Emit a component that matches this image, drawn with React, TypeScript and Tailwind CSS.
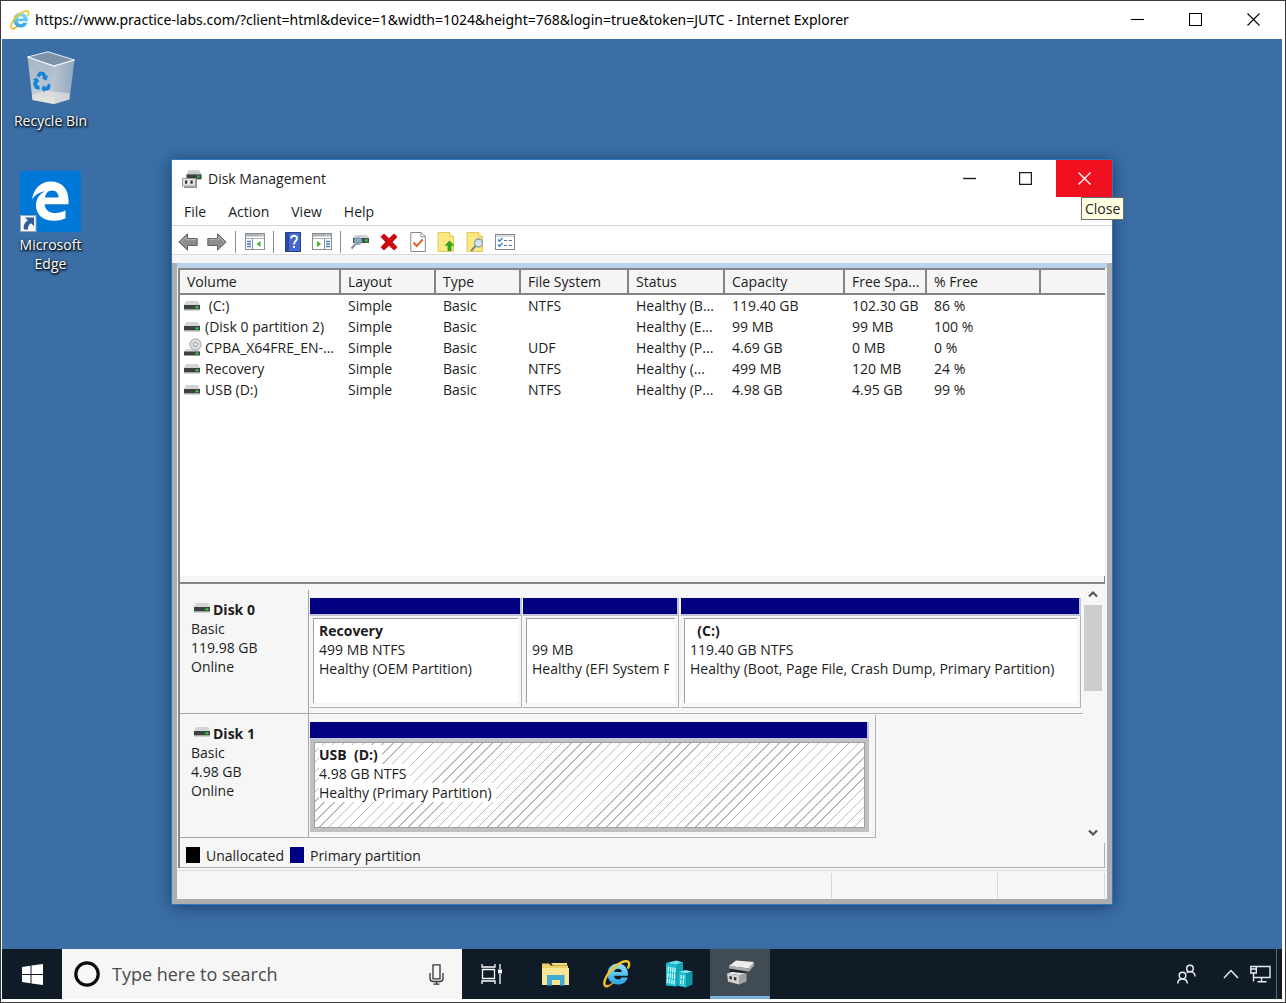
import React from "react";

type IconProps = { className?: string };

function IeIcon({ className }: IconProps) {
  return (
    <svg viewBox="0 0 28 28" className={className} aria-hidden="true">
      <defs>
        <linearGradient id="ieBlue" x1="0" y1="0" x2="0" y2="1">
          <stop offset="0" stopColor="#8fe3fb" />
          <stop offset="1" stopColor="#2ba3e4" />
        </linearGradient>
      </defs>
      <path
        fill="url(#ieBlue)"
        d="M15 3.500c-6 0-10.500 4.600-10.500 10.500S9 24.500 15 24.500c4.700 0 8.400-2.600 9.600-7h-6c-.6 1.300-1.800 2-3.500 2-2.300 0-3.900-1.400-4-3.800h13.800C25.600 8.800 21.500 3.500 15 3.500zm-3.800 8.500c.4-2 1.800-3.200 3.900-3.200s3.500 1.200 3.800 3.200z"
      />
      <path
        d="M5 26C.5 27.500 0 22.500 4 15.500 8.500 8 17.500 1.500 23 1.300c3.700-.1 3.700 3.200 2.200 6.400"
        fill="none"
        stroke="#f3c52d"
        strokeWidth="2.400"
        strokeLinecap="round"
      />
      <path d="M5 26c1.600-.4 3.300-1.600 4.800-2.900" fill="none" stroke="#d99d1a" strokeWidth="1.700" strokeLinecap="round" />
    </svg>
  );
}

function RecycleBin({ className }: IconProps) {
  return (
    <svg viewBox="0 0 48 54" className={className} aria-hidden="true">
      <defs>
        <linearGradient id="binL" x1="0" y1="0" x2="0" y2="1">
          <stop offset="0" stopColor="#a6b6c6" />
          <stop offset="0.800" stopColor="#bfc9d2" />
          <stop offset="1" stopColor="#e3e2de" />
        </linearGradient>
        <linearGradient id="binR" x1="0" y1="0" x2="1" y2="0">
          <stop offset="0" stopColor="#b7c4d0" />
          <stop offset="1" stopColor="#8ea7bf" />
        </linearGradient>
      </defs>
      <path d="M.5 6 21 .8 47.500 9 27 15z" fill="#7d93a9" stroke="#e6edf3" strokeWidth="1" />
      <path d="M.5 6 27 15v38L5.500 49z" fill="url(#binL)" />
      <path d="M47.500 9 27 15v38l15.500-4.500z" fill="url(#binR)" />
      <path d="M5 43.500l14-4 24 3-.8 6L27 53 5.500 49z" fill="#e9e6e0" opacity=".65" />
      <path d="M.5 6 27 15 47.500 9" fill="none" stroke="#eef3f7" strokeWidth="1.200" />
      <g fill="#1583d8">
        <path d="M9.500 24.500l3-4 4.500.5 2.500 4 1.500-.6-1.600 5-4.600-2 1.600-.8-2.200-3.200-1.700 3z" />
        <path d="M6 28l4-1.200 2.700 4-1.500-.4-1.200 3.600 2.500.8.200 4-4.500-1L6 33l1.300-3.500z" />
        <path d="M14.500 37.500l2.700-4v2h2.800l1-3.500 2.700 2.200-1 4-3.200 1.500h-2.300v2z" />
      </g>
    </svg>
  );
}

function EdgeTile({ className }: IconProps) {
  return (
    <svg viewBox="0 0 61 61" className={className} aria-hidden="true">
      <rect width="61" height="61" fill="#0078d7" />
      <path
        fill="#fff"
        d="M12 28.500C13.500 18 20.500 10.500 31 10.500c11 0 17.500 8 17.500 18.500v4.200H24.700c.4 6.200 5 8.800 11 8.800 3.600 0 6.900-1 9.800-2.700v8c-3.300 1.700-7.300 2.500-11.500 2.500-10.600 0-18-5.800-18-15.500 0-6.500 3.500-11.200 8.700-13.800-5 .5-9.600 3-12.700 8zM25 26.500h13.600c0-4.200-2.500-7-6.500-7-3.900 0-6.500 2.800-7.100 7z"
      />
      <rect x="0.500" y="44.500" width="15.500" height="16" fill="#f5f7fa" stroke="#9aa7b5" />
      <path fill="#2f5d9b" d="M5 46.500h9V55l-3-2.800c-2.200 1.300-3.300 3.300-3 6.300H4c-1-4 .7-7.200 4-9z" />
    </svg>
  );
}

function DriveIcon({ className }: IconProps) {
  return (
    <svg viewBox="0 0 16 11" className={className} aria-hidden="true">
      <path d="M2 1h12l2 4H0z" fill="#d3d6d6" />
      <rect y="5" width="16" height="4.500" fill="#3c4240" />
      <rect y="9.500" width="16" height="1" fill="#a9adac" />
      <rect x="11.500" y="6.300" width="3" height="2" fill="#36d447" />
    </svg>
  );
}

function CdIcon({ className }: IconProps) {
  return (
    <svg viewBox="0 0 18 19" className={className} aria-hidden="true">
      <path d="M2 11h12l2 3H0z" fill="#d3d6d6" />
      <rect y="13.500" width="16" height="4" fill="#3c4240" />
      <rect x="11.500" y="14.500" width="3" height="2" fill="#36d447" />
      <circle cx="11.500" cy="6.500" r="5.700" fill="#d9dbdc" stroke="#a4a7a9" />
      <circle cx="11.500" cy="6.500" r="2" fill="#fff" stroke="#8d9193" />
    </svg>
  );
}

function DiskMgmtIcon({ className }: IconProps) {
  return (
    <svg viewBox="0 0 20 18" className={className} aria-hidden="true">
      <path d="M6.500.3h10.500l2.500 4h-15z" fill="#c9cccb" />
      <path d="M4.500 4.300h15v5h-15z" fill="#39413d" />
      <rect x="15" y="5.500" width="2.500" height="2.200" fill="#2fc64a" />
      <rect x="2.500" y="8.500" width="12" height="9" fill="#bdbdbd" stroke="#8d8d8d" />
      <rect x=".5" y="8.500" width="13" height="7.500" fill="#e4e4e4" stroke="#9b9b9b" />
      <rect x="3" y="10.500" width="2.200" height="3.200" fill="#333" />
      <rect x="8.500" y="10.500" width="2.200" height="3.200" fill="#333" />
    </svg>
  );
}

function Arrow({ flip }: { flip?: boolean }) {
  return (
    <svg viewBox="0 0 20 18" className={flip ? "h-[18px] w-5 -scale-x-100" : "h-[18px] w-5"} aria-hidden="true">
      <path d="M.8 9 9.500.8v4.700h9.700v7H9.500v4.700z" fill="#8d8d8d" stroke="#636363" />
      <path d="M3 9l5.300-5v2.700H18" fill="none" stroke="#b5b5b5" />
    </svg>
  );
}

function PaneIcon({ right }: { right?: boolean }) {
  return (
    <svg viewBox="0 0 20 17" className="h-[17px] w-5" aria-hidden="true">
      <rect x=".5" y=".5" width="19" height="16" fill="#fff" stroke="#8c8f91" />
      <rect x="1" y="1" width="18" height="2.500" fill="#a9b0b6" />
      <path d="M14 2h1M17 2h1" stroke="#fff" />
      <path d="M1 5.500h18" stroke="#a5adb5" />
      <path d={right ? "M12.500 6v10" : "M7.500 6v10"} stroke="#8c8f91" />
      <path
        d={right ? "M14 8.500h4M14 11h4M14 13.500h4" : "M2 8.500h4M2 11h4M2 13.500h4"}
        stroke="#4a7fc0"
        strokeWidth="1.300"
      />
      <path d={right ? "M5 8v6l4-3z" : "M15.500 8v6l-4-3z"} fill="#45b31e" />
    </svg>
  );
}

function HelpIcon() {
  return (
    <svg viewBox="0 0 16 20" className="h-5 w-4" aria-hidden="true">
      <rect x=".5" y=".5" width="15" height="19" fill="#4468d0" stroke="#2a3f8c" />
      <path d="M1 1h3v18H1z" fill="#2b489f" />
      <path d="M6 6.500C6 2.800 12 2.800 12 6.500c0 2.500-3 2.500-3 6" fill="none" stroke="#fff" strokeWidth="1.800" />
      <rect x="8" y="14" width="2" height="2" fill="#fff" />
    </svg>
  );
}

function MagnifyDisk() {
  return (
    <svg viewBox="0 0 20 17" className="h-[17px] w-5" aria-hidden="true">
      <path d="M5 2h12l2 3H3z" fill="#d0d4d4" />
      <path d="M3 5h16v5H3z" fill="#48504f" />
      <rect x="15" y="6.300" width="2.800" height="2.300" fill="#32c550" />
      <circle cx="8" cy="8" r="3.600" fill="#7ea9bd" stroke="#93a5ae" />
      <path d="M5.500 11 1.500 15.500" stroke="#7d8c95" strokeWidth="2" />
    </svg>
  );
}

function RedX() {
  return (
    <svg viewBox="0 0 18 18" className="h-[18px] w-[18px]" aria-hidden="true">
      <path d="M4 .5 9 5.300 14 .5 17.500 3.800 12.600 9l4.900 5.200L14 17.500 9 12.700 4 17.500.5 14.200 5.400 9 .5 3.800z" fill="#cc0a12" />
    </svg>
  );
}

function CheckDoc() {
  return (
    <svg viewBox="0 0 16 20" className="h-5 w-4" aria-hidden="true">
      <path d="M.8.5h10.500l4 4v15H.8z" fill="#fff" stroke="#8b8b8b" />
      <path d="M11 .5v4.300h4.500" fill="none" stroke="#8b8b8b" />
      <path d="M3.500 10.500l3.200 3.500 6-6.500" fill="none" stroke="#e5622a" strokeWidth="2" />
    </svg>
  );
}

function YellowDoc({ search }: { search?: boolean }) {
  return (
    <svg viewBox="0 0 19 20" className="h-5 w-[19px]" aria-hidden="true">
      <path d="M1 .5h11.500l4 4v15H1z" fill="#fbe882" stroke="#e3c85c" />
      <path d="M12.500.5v4h4" fill="#fff6c2" stroke="#e3c85c" />
      {search ? (
        <>
          <circle cx="12.500" cy="11" r="4" fill="#cfe6f2" stroke="#8b9ba5" strokeWidth="1.300" />
          <path d="M9.500 14 5 19" stroke="#7c868c" strokeWidth="2" />
        </>
      ) : (
        <path d="M12.500 8.500l5 5.300h-3V19h-4v-5.200h-3z" fill="#33a51d" />
      )}
    </svg>
  );
}

function ChecklistIcon() {
  return (
    <svg viewBox="0 0 20 16" className="h-4 w-5" aria-hidden="true">
      <rect x=".5" y=".5" width="19" height="15" fill="#fff" stroke="#82878c" />
      <path d="M1 2h18" stroke="#b7bdc2" />
      <path d="M3 5.500l1.500 1.700L7.500 4M3 10.500l1.500 1.700L7.500 9" fill="none" stroke="#2a7fd0" strokeWidth="1.300" />
      <path d="M9 6.500h3M13.500 6.500h3.500M9 11.500h3M13.500 11.500h3.500" stroke="#6c7379" />
    </svg>
  );
}

function Glyph({ kind, size }: { kind: "min" | "max" | "close"; size: "s" | "l" }) {
  const d = { min: "M0 6.500h13", max: "M.5.5h12v12H.5z", close: "M.5.500l12 12M12.500.500l-12 12" }[kind];
  return (
    <svg viewBox="0 0 13 13" className="h-[13px] w-[13px]" aria-hidden="true">
      <path d={d} fill="none" stroke="currentColor" strokeWidth={size === "l" ? 1.400 : 1.100} />
    </svg>
  );
}

const columns = [
  { name: "Volume", width: "w-[160px]" },
  { name: "Layout", width: "w-[95px]" },
  { name: "Type", width: "w-[85px]" },
  { name: "File System", width: "w-[108px]" },
  { name: "Status", width: "w-[96px]" },
  { name: "Capacity", width: "w-[120px]" },
  { name: "Free Spa...", width: "w-[82px]" },
  { name: "% Free", width: "w-[114px]" },
];

const volumes = [
  ["\u00a0(C:)", "Simple", "Basic", "NTFS", "Healthy (B...", "119.40 GB", "102.30 GB", "86 %"],
  ["(Disk 0 partition 2)", "Simple", "Basic", "", "Healthy (E...", "99 MB", "99 MB", "100 %"],
  ["CPBA_X64FRE_EN-...", "Simple", "Basic", "UDF", "Healthy (P...", "4.69 GB", "0 MB", "0 %"],
  ["Recovery", "Simple", "Basic", "NTFS", "Healthy (...", "499 MB", "120 MB", "24 %"],
  ["USB (D:)", "Simple", "Basic", "NTFS", "Healthy (P...", "4.98 GB", "4.95 GB", "99 %"],
];

function VolumeTable() {
  return (
    <table className="w-full table-fixed border-collapse text-left whitespace-nowrap">
      <thead>
        <tr className="h-6">
          {columns.map((c) => (
            <th
              key={c.name}
              className={`${c.width} border-r-2 border-b-2 border-[#858585] bg-[#f5f5f5] pl-[7px] font-normal`}
            >
              {c.name}
            </th>
          ))}
          <th aria-label="Spare" className="border-b-2 border-[#858585] bg-[#f5f5f5]" />
        </tr>
      </thead>
      <tbody>
        {volumes.map((row) => (
          <tr key={row[0]} className="h-[21px]">
            {row.map((cell, i) =>
              i === 0 ? (
                <td key={i} className="p-0 pl-1">
                  <div className="flex h-[21px] items-center">
                    <span className="flex w-[21px] shrink-0">
                      {cell.startsWith("CPBA") ? <CdIcon className="h-[19px] w-[18px]" /> : <DriveIcon className="h-[11px] w-4" />}
                    </span>
                    <span>{cell}</span>
                  </div>
                </td>
              ) : (
                <td key={i} className="p-0 pl-2">
                  {cell}
                </td>
              ),
            )}
          </tr>
        ))}
      </tbody>
    </table>
  );
}

function DiskLabel({ name, size }: { name: string; size: string }) {
  return (
    <div className="w-[129px] shrink-0 border-r border-b border-[#a6a6a6] pt-[10px] pl-[11px]">
      <div className="flex items-center gap-[3px] pl-[3px] font-bold">
        <DriveIcon className="mb-1 h-[11px] w-4" />
        {name}
      </div>
      <div>Basic</div>
      <div>{size}</div>
      <div>Online</div>
    </div>
  );
}

function Partition({
  name,
  lines,
  className,
  selected,
}: {
  name: string;
  lines: string[];
  className: string;
  selected?: boolean;
}) {
  return (
    <div className={`flex min-w-0 flex-col ${className}`}>
      <div className="h-[18px] border-r-2 border-b-2 border-[#c3c3d6] bg-[#000080]" />
      <div
        className={
          selected
            ? "flex flex-1 border-4 border-t-2 border-[#bfc1c0]"
            : "flex flex-1 border-r border-b border-[#b0b0b0] p-[3px] pt-[2px] pb-1"
        }
      >
        <div
          className={
            selected
              ? "min-w-0 flex-1 overflow-hidden border border-[#a0a0a0] bg-[repeating-linear-gradient(135deg,#fff_0px,#fff_6px,#bcbcbc_6px,#bcbcbc_7px)] pt-[2px] pl-1 whitespace-nowrap"
              : "min-w-0 flex-1 border-t border-l border-[#a0a0a0] bg-white pt-[2px] pr-[6px] pl-[5px] whitespace-nowrap"
          }
        >
          <div className="h-[19px] font-bold">
            <span className={selected ? "inline-block bg-white pr-1 whitespace-pre" : "whitespace-pre"}>{name}</span>
          </div>
          {lines.map((l) => (
            <div key={l} className="h-[19px] overflow-hidden">
              <span className={selected ? "inline-block bg-white pr-1" : ""}>{l}</span>
            </div>
          ))}
        </div>
      </div>
    </div>
  );
}

function ToolButton({ label, children }: { label: string; children: React.ReactNode }) {
  return (
    <button type="button" aria-label={label} className="flex h-6 w-[29px] items-center justify-center">
      {children}
    </button>
  );
}

function Separator() {
  return (
    <div className="flex h-[22px] w-[9px] justify-center">
      <div className="w-px bg-[#8f8f8f]" />
    </div>
  );
}

function DiskManagement() {
  return (
    <section
      aria-label="Disk Management"
      className="absolute top-[120px] left-[169px] flex w-[942px] flex-col border border-[#2b7ac0] bg-white text-[14px] leading-[19px] text-[#1c1c1c] shadow-[0_2px_14px_rgba(0,25,70,0.55)]"
    >
      <header className="flex h-[37px] items-center pl-[10px]">
        <DiskMgmtIcon className="h-[18px] w-5" />
        <h1 className="flex-1 pl-[6px]">Disk Management</h1>
        <button type="button" aria-label="Minimize" className="flex h-full w-14 items-center justify-center pr-[5px]">
          <Glyph kind="min" size="l" />
        </button>
        <button type="button" aria-label="Maximize" className="flex h-full w-14 items-center justify-center pr-[5px]">
          <Glyph kind="max" size="l" />
        </button>
        <div className="relative h-full">
          <button
            type="button"
            aria-label="Close"
            className="flex h-full w-14 items-center justify-center bg-[#f01020] text-white"
          >
            <Glyph kind="close" size="l" />
          </button>
          <div
            role="tooltip"
            className="absolute top-full left-[25px] z-10 flex h-[23px] items-center border border-[#6b6b6b] bg-[#ffffe1] px-[3px]"
          >
            Close
          </div>
        </div>
      </header>

      <nav className="flex h-[29px] items-center border-b border-[#d4d4d4] pl-px">
        {["File", "Action", "View", "Help"].map((m) => (
          <button key={m} type="button" className="px-[11px]">
            {m}
          </button>
        ))}
      </nav>

      <div className="flex h-[29px] items-center border-b border-[#dcdcdc] pt-[3px] pl-px">
        <ToolButton label="Back"><Arrow /></ToolButton>
        <ToolButton label="Forward"><Arrow flip /></ToolButton>
        <Separator />
        <ToolButton label="Show console tree"><PaneIcon /></ToolButton>
        <Separator />
        <ToolButton label="Help topics"><HelpIcon /></ToolButton>
        <ToolButton label="Show action pane"><PaneIcon right /></ToolButton>
        <Separator />
        <ToolButton label="Rescan disks"><MagnifyDisk /></ToolButton>
        <ToolButton label="Delete"><RedX /></ToolButton>
        <ToolButton label="Properties"><CheckDoc /></ToolButton>
        <ToolButton label="Open"><YellowDoc /></ToolButton>
        <ToolButton label="Explore"><YellowDoc search /></ToolButton>
        <ToolButton label="Settings"><ChecklistIcon /></ToolButton>
      </div>
      <div className="h-2 bg-[#f5f5f5]" />

      <div className="border-x-[5px] border-b-[5px] border-[#acaeae] bg-[#f6f6f6]">
        <div className="h-[5px] bg-[#b9d1ea]" />
        <div className="mr-[2px] ml-[1px] border-t-2 border-l-2 border-[#858585]">
          <div className="flex h-[306px] flex-col bg-white">
            <VolumeTable />
          </div>
          <div className="h-[8px] border-r border-b-2 border-[#858585] bg-[#f5f5f5]" />

          <div className="flex h-[259px] pt-[6px]">
            <div className="min-w-0 flex-1">
              <div className="flex h-[124px]">
                <DiskLabel name="Disk 0" size="119.98 GB" />
                <div className="flex min-w-0 flex-1 border-b border-[#b0b0b0] pt-2 pr-[2px] pb-[5px] pl-px">
                  <Partition className="w-[212px]" name="Recovery" lines={["499 MB NTFS", "Healthy (OEM Partition)"]} />
                  <Partition className="ml-px w-[156px]" name={" "} lines={["99 MB", "Healthy (EFI System P"]} />
                  <Partition
                    className="ml-[2px] flex-1"
                    name="  (C:)"
                    lines={["119.40 GB NTFS", "Healthy (Boot, Page File, Crash Dump, Primary Partition)"]}
                  />
                </div>
              </div>
              <div className="flex h-[124px]">
                <DiskLabel name="Disk 1" size="4.98 GB" />
                <div className="mt-px flex w-[567px] border-r border-b border-[#b0b0b0] pt-[7px] pr-[6px] pb-[5px] pl-px">
                  <Partition
                    selected
                    className="flex-1"
                    name="USB  (D:)"
                    lines={["4.98 GB NTFS", "Healthy (Primary Partition)"]}
                  />
                </div>
              </div>
            </div>
            <div className="flex w-[22px] flex-col items-center pr-[2px]">
              <button type="button" aria-label="Scroll up" className="flex h-[15px] items-start">
                <svg viewBox="0 0 10 8" className="h-2 w-[10px]" aria-hidden="true">
                  <path d="M1 6.500l4-4 4 4" fill="none" stroke="#555" strokeWidth="2.200" />
                </svg>
              </button>
              <div className="h-[86px] w-[18px] bg-[#cbcecc]" />
              <div className="flex-1" />
              <button type="button" aria-label="Scroll down" className="flex h-[20px] items-center">
                <svg viewBox="0 0 10 8" className="h-2 w-[10px]" aria-hidden="true">
                  <path d="M1 1.500l4 4 4-4" fill="none" stroke="#555" strokeWidth="2.200" />
                </svg>
              </button>
            </div>
          </div>

          <div className="flex h-[25px] items-center border-r border-b border-[#b0b0b0] pl-[6px]">
            <span className="h-4 w-[14px] bg-black" />
            <span className="pl-[6px]">Unallocated</span>
            <span className="ml-[6px] h-4 w-[14px] bg-[#000080]" />
            <span className="pl-[6px]">Primary partition</span>
          </div>
        </div>
        <footer className="mt-[2px] flex h-[29px] border-t border-[#dedede] pt-[2px] pb-px">
          <div className="flex-1 border-r border-[#d7d7d7]" />
          <div className="w-[166px] border-r border-[#d7d7d7]" />
          <div className="mr-[2px] w-[107px] border-r border-[#d7d7d7]" />
        </footer>
      </div>
    </section>
  );
}

function DesktopIcon({ label, children }: { label: string; children: React.ReactNode }) {
  return (
    <button
      type="button"
      className="flex w-full flex-col items-center text-[14px] leading-[19px] text-white [text-shadow:1px_1px_2px_#000,0_1px_3px_#000]"
    >
      {children}
      <span className="px-2">{label}</span>
    </button>
  );
}

function TaskButton({ label, children }: { label: string; children: React.ReactNode }) {
  return (
    <button type="button" aria-label={label} className="flex w-[62px] items-center justify-center">
      {children}
    </button>
  );
}

function Taskbar() {
  return (
    <footer className="flex h-[50px] shrink-0 bg-[#0f1b27] text-white">
      <button type="button" aria-label="Start" className="flex w-[60px] items-center justify-center">
        <svg viewBox="0 0 21 21" className="h-[21px] w-[21px]" aria-hidden="true">
          <path fill="#fff" d="M0 3l8.500-1.200V10H0zM9.500 1.600 21 0v10H9.500zM0 11h8.500v8.200L0 18zM9.500 11H21v10L9.500 19.400z" />
        </svg>
      </button>
      <div className="flex w-[400px] items-center bg-[#f6f6f6] px-3 text-[#4a4a4a]">
        <svg viewBox="0 0 26 26" className="h-[26px] w-[26px]" aria-hidden="true">
          <circle cx="13" cy="13" r="11.200" fill="none" stroke="#0b0b0b" strokeWidth="3.200" />
        </svg>
        <input
          type="text"
          aria-label="Search"
          placeholder="Type here to search"
          className="min-w-0 flex-1 bg-transparent pl-3 text-[18px] leading-6 outline-none placeholder:text-[#4a4a4a]"
        />
        <button type="button" aria-label="Voice search" className="mr-[6px]">
          <svg viewBox="0 0 15 21" className="h-[21px] w-[15px]" aria-hidden="true">
            <path
              d="M4 .8h7v14H4zM1 9v5.500c0 2 1 3 3 3h7c2 0 3-1 3-3V9M7.500 17.500V20M4.500 20.200h6"
              fill="none"
              stroke="#333"
              strokeWidth="1.300"
            />
          </svg>
        </button>
      </div>
      <TaskButton label="Task view">
        <svg viewBox="0 0 24 20" className="h-5 w-6" aria-hidden="true">
          <path
            d="M1 0v3h13V0M1 20v-3h13v3M1.500 5.500h12v9h-12zM19 0v5M19 10v10"
            fill="none"
            stroke="#fff"
            strokeWidth="1.300"
          />
          <rect x="17" y="5.500" width="4" height="4" fill="#fff" />
        </svg>
      </TaskButton>
      <TaskButton label="File Explorer">
        <svg viewBox="0 0 27 24" className="h-6 w-[27px]" aria-hidden="true">
          <path d="M0 1.500h7l2 2h17V23H0z" fill="#f0cf65" />
          <path d="M0 6h27v17H0z" fill="#fce596" />
          <path d="M9 1h16v2.500H11z" fill="#fbdc7b" />
          <path d="M5 13h17.500v10.500h-4.500v-5.500h-8v5.500H5z" fill="#3fabd3" />
        </svg>
      </TaskButton>
      <TaskButton label="Internet Explorer">
        <IeIcon className="h-7 w-7" />
      </TaskButton>
      <TaskButton label="Server Manager">
        <svg viewBox="0 0 28 28" className="h-7 w-7" aria-hidden="true">
          <path d="M1 3 11.500.5 18 2.500 11 5z" fill="#5fe3ec" />
          <path d="M1 3l10 2v21.500L1 25.500z" fill="#1fc0cf" />
          <path d="M11 5l7-2.500v22l-7 2z" fill="#12a5b6" />
          <path d="M3.500 6.500 2.200 23M5.800 7 4.500 23.500M8 7.500 6.800 24M10 8 9 24.500" stroke="#d8fbfd" strokeWidth="1.200" strokeDasharray="5 1" />
          <path d="M14 12l6.500-2 7 1.500-6.500 2z" fill="#7cecf2" />
          <path d="M14 12l7 1.500v14l-7-1.500z" fill="#1fc0cf" />
          <path d="M21 13.500l6.500-2v13l-6.500 3z" fill="#0f97a8" />
          <path d="M16.300 15l-.8 10.500M18.800 15.500l-.8 10.500" stroke="#d8fbfd" strokeWidth="1.200" strokeDasharray="4 1" />
        </svg>
      </TaskButton>
      <button
        type="button"
        aria-label="Disk Management"
        className="flex w-[60px] items-center justify-center border-b-[3px] border-[#76b0dc] bg-[#414b53]"
      >
        <svg viewBox="0 0 28 25" className="h-[25px] w-7" aria-hidden="true">
          <path d="M3 6 10 .5 28 2l-5 6.500z" fill="#ececec" />
          <path d="M3 6l20 2.500L28 2v3.500l-5 6L3 8.500z" fill="#a9abac" />
          <path d="M4 9l15 2.500V14L4 12z" fill="#20262b" />
          <path d="M1 13.500l5-1.500 14 1.500-6 1.500z" fill="#f0f0f0" />
          <path d="M1 13.500l12 1.500v9.500L2 21.500z" fill="#d2d2d2" />
          <path d="M13 15l7.500-1.500v8L13 24.500z" fill="#a3a3a3" />
          <path d="M3.500 16l2.300.4v3.200l-2.300-.6zM8 17l2.300.4v3.200L8 20z" fill="#2e2e2e" />
        </svg>
      </button>
      <div className="flex-1" />
      <button type="button" aria-label="People" className="mr-[27px]">
        <svg viewBox="0 0 19 20" className="h-5 w-[19px]" fill="none" stroke="#e8ebee" strokeWidth="1.500" aria-hidden="true">
          <circle cx="13" cy="4.500" r="3.300" />
          <path d="M9.500 8.500c5-2.200 8.500 0 8.700 4" />
          <circle cx="5.500" cy="11.500" r="3.300" />
          <path d="M.8 19.500c.2-6 9.300-6 9.500 0" />
        </svg>
      </button>
      <button type="button" aria-label="Show hidden icons" className="mr-[11px]">
        <svg viewBox="0 0 16 10" className="h-[10px] w-4" aria-hidden="true">
          <path d="M1 9l7-7.500L15 9" fill="none" stroke="#e8ebee" strokeWidth="1.500" />
        </svg>
      </button>
      <button type="button" aria-label="Network" className="mr-[5px]">
        <svg viewBox="0 0 21 18" className="h-[18px] w-[21px]" fill="none" stroke="#e8ebee" strokeWidth="1.400" aria-hidden="true">
          <path d="M6.500 1.500h13.500v11H4M11.500 12.500v4M7.500 16.700h9M.8 1.500h5.500v6.500H.8zM.8 4h5.500M3.500 8v8.500" />
        </svg>
      </button>
      <div className="mr-[5px] w-px bg-[#5d6770]" />
    </footer>
  );
}

export default function App() {
  return (
    <div className="flex h-screen flex-col border border-[#3a3a3a] bg-white pr-[3px] pb-[3px] pl-px font-['Open_Sans','Noto_Sans',sans-serif]">
      <header className="flex h-[38px] shrink-0 items-center pl-2 text-[14px] leading-5 text-black">
        <IeIcon className="h-5 w-5" />
        <h2 className="flex-1 truncate pl-[5px] font-['Noto_Sans',sans-serif]">
          https://www.practice-labs.com/?client=html&amp;device=1&amp;width=1024&amp;height=768&amp;login=true&amp;token=JUTC
          - Internet Explorer
        </h2>
        <button type="button" aria-label="Minimize browser" className="flex h-full w-[58px] items-center justify-center pb-px">
          <Glyph kind="min" size="s" />
        </button>
        <button type="button" aria-label="Maximize browser" className="flex h-full w-[58px] items-center justify-center pb-px">
          <Glyph kind="max" size="s" />
        </button>
        <button type="button" aria-label="Close browser" className="flex h-full w-[58px] items-center justify-center pb-px">
          <Glyph kind="close" size="s" />
        </button>
      </header>
      <main className="relative flex-1 bg-[#3a6ea5]">
        <div className="flex w-[97px] flex-col gap-[41px] pt-3">
          <DesktopIcon label="Recycle Bin">
            <RecycleBin className="mb-[6px] h-[54px] w-12" />
          </DesktopIcon>
          <DesktopIcon label="Microsoft Edge">
            <EdgeTile className="mb-[3px] h-[61px] w-[61px]" />
          </DesktopIcon>
        </div>
        <DiskManagement />
      </main>
      <Taskbar />
    </div>
  );
}
